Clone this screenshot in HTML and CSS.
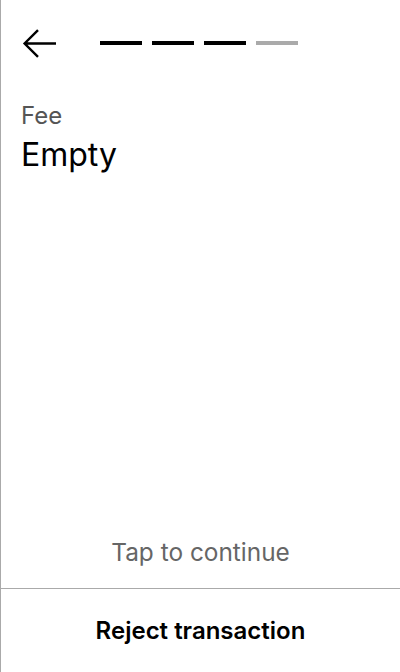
FILE: index.html
```html
<!DOCTYPE html>
<html>
<head>
<meta charset="utf-8">
<link rel="stylesheet" href="styles.css">
</head>
<body>
<div class="screen">
  <div class="header">
    <button class="back" aria-label="Back">
      <svg width="36" height="30" viewBox="0 0 36 30"><path d="M35 15.5H3.8M17 2.2L3.6 15.5L17 28.8" fill="none" stroke="#000" stroke-width="2.4"/></svg>
    </button>
    <div class="steps">
      <span class="step done"></span>
      <span class="step done"></span>
      <span class="step done"></span>
      <span class="step"></span>
    </div>
  </div>
  <div class="content">
    <div class="label">Fee</div>
    <div class="value">Empty</div>
  </div>
  <div class="tap">Tap to continue</div>
  <div class="footer">Reject transaction</div>
</div>
</body>
</html>
```
FILE: styles.css
```css
html, body { margin: 0; padding: 0; background: #fff; }
body { font-family: Inter, "Noto Sans", sans-serif; }
.screen {
  width: 400px; height: 672px; box-sizing: border-box;
  border-left: 1px solid #aaa;
  display: flex; flex-direction: column;
}
.header { display: flex; align-items: center; height: 44px; padding: 21px 0 0 20px; }
.back { background: none; border: 0; padding: 0; width: 36px; height: 30px; display: block; }
.back svg { display: block; }
.steps { display: flex; gap: 10px; margin-left: 43px; margin-top: -1px; }
.step { width: 42px; height: 4px; background: #aaa; }
.step.done { background: #000; }
.content { padding: 37px 20px 0 20px; flex: 1; }
.label { font-size: 24px; line-height: 28px; color: #555; }
.value { font-size: 32px; line-height: 40px; color: #000; margin-top: 5px; }
.tap { text-align: center; font-size: 24.4px; color: #666; line-height: 28px; padding-bottom: 22px; }
.footer { border-top: 1px solid #aaa; height: 83px; display: flex; align-items: center; justify-content: center; font-size: 24px; line-height: 28px; font-weight: 600; color: #000; }
```
